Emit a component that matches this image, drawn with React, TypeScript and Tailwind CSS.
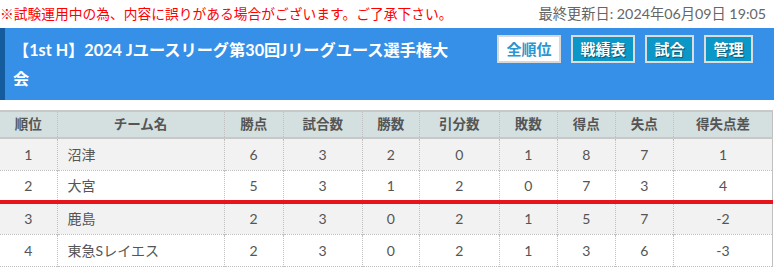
import React from 'react';

type Row = { rank: number; team: string; pts: number; played: number; win: number; draw: number; lose: number; gf: number; ga: number; diff: string };

const rows: Row[] = [
  { rank: 1, team: '沼津', pts: 6, played: 3, win: 2, draw: 0, lose: 1, gf: 8, ga: 7, diff: '1' },
  { rank: 2, team: '大宮', pts: 5, played: 3, win: 1, draw: 2, lose: 0, gf: 7, ga: 3, diff: '4' },
  { rank: 3, team: '鹿島', pts: 2, played: 3, win: 0, draw: 2, lose: 1, gf: 5, ga: 7, diff: '-2' },
  { rank: 4, team: '東急Sレイエス', pts: 2, played: 3, win: 0, draw: 2, lose: 1, gf: 3, ga: 6, diff: '-3' },
];

const heads = ['順位', 'チーム名', '勝点', '試合数', '勝数', '引分数', '敗数', '得点', '失点', '得失点差'];
const widths = ['w-[57px]', 'w-[167px]', 'w-[59px]', 'w-[79px]', 'w-[57px]', 'w-[80px]', 'w-[58px]', 'w-[58px]', 'w-[58px]', 'w-[99px]'];

const NavButton: React.FC<{ label: string; active?: boolean; wide?: boolean }> = ({ label, active, wide }) => (
  <button
    className={
      (wide ? 'w-[64px] ' : 'w-[49px] ') +
      (active
        ? 'bg-white text-[#2b95cf] border-[#d8d8d8] '
        : 'bg-[#0b98c9] text-white border-[#dcdcdc] [text-shadow:1px_1px_1px_rgba(0,0,0,0.45)] ') +
      'h-[28px] border-2 text-[15px] font-bold leading-none'
    }
  >
    {label}
  </button>
);

const App: React.FC = () => {
  return (
    <div className="w-[774px] h-[269px] overflow-hidden bg-white font-['Lato','Noto_Sans_CJK_JP',sans-serif] text-[#555]">
      <div className="h-[28px] flex items-center justify-between pr-[8px]">
        <p className="text-[13.75px] text-[#ff0000]">※試験運用中の為、内容に誤りがある場合がございます。ご了承下さい。</p>
        <p className="text-[14.25px] text-[#666]">最終更新日: 2024年06月09日 19:05</p>
      </div>

      <div className="h-[72px] bg-[#3790e8] border-l-[5px] border-[#145c9e] flex justify-between pr-[21px]">
        <h1 className="w-[451px] pl-[8px] pt-[7px] text-[16.2px] leading-[29px] font-bold text-white">
          【1st H】2024 Jユースリーグ第30回Jリーグユース選手権大会
        </h1>
        <div className="flex gap-[10px] pt-[7px] h-fit">
          <NavButton label="全順位" active wide />
          <NavButton label="戦績表" wide />
          <NavButton label="試合" />
          <NavButton label="管理" />
        </div>
      </div>

      <table className="mt-[10px] w-[773px] table-fixed border-collapse text-[14px]">
        <thead>
          <tr className="bg-[#d4dfdf] border-t-2 border-b-2 border-[#c8c8c8]">
            {heads.map((h, i) => (
              <th
                key={h}
                className={widths[i] + ' h-[27px] font-bold text-[13.5px] text-[#555] border-r border-dotted border-[#c0c0c0] last:border-solid'}
              >
                {h}
              </th>
            ))}
          </tr>
        </thead>
        <tbody>
          {rows.map((r, idx) => {
            const cells = [r.rank, r.team, r.pts, r.played, r.win, r.draw, r.lose, r.gf, r.ga, r.diff];
            return (
              <tr
                key={r.rank}
                className={
                  (idx % 2 === 0 ? 'bg-[#f2f2f2] ' : 'bg-white ') +
                  (idx === 1 ? 'border-b-4 border-solid border-[#e8141c]' : 'border-b border-dotted border-[#c0c0c0]')
                }
              >
                {cells.map((c, i) => (
                  <td
                    key={i}
                    className={
                      (i === 1 ? 'text-left pl-[10px] ' : 'text-center ') +
                      'h-[32px] border-r border-dotted border-[#c0c0c0] last:border-solid'
                    }
                  >
                    {c}
                  </td>
                ))}
              </tr>
            );
          })}
        </tbody>
      </table>
    </div>
  );
};

export default App;
